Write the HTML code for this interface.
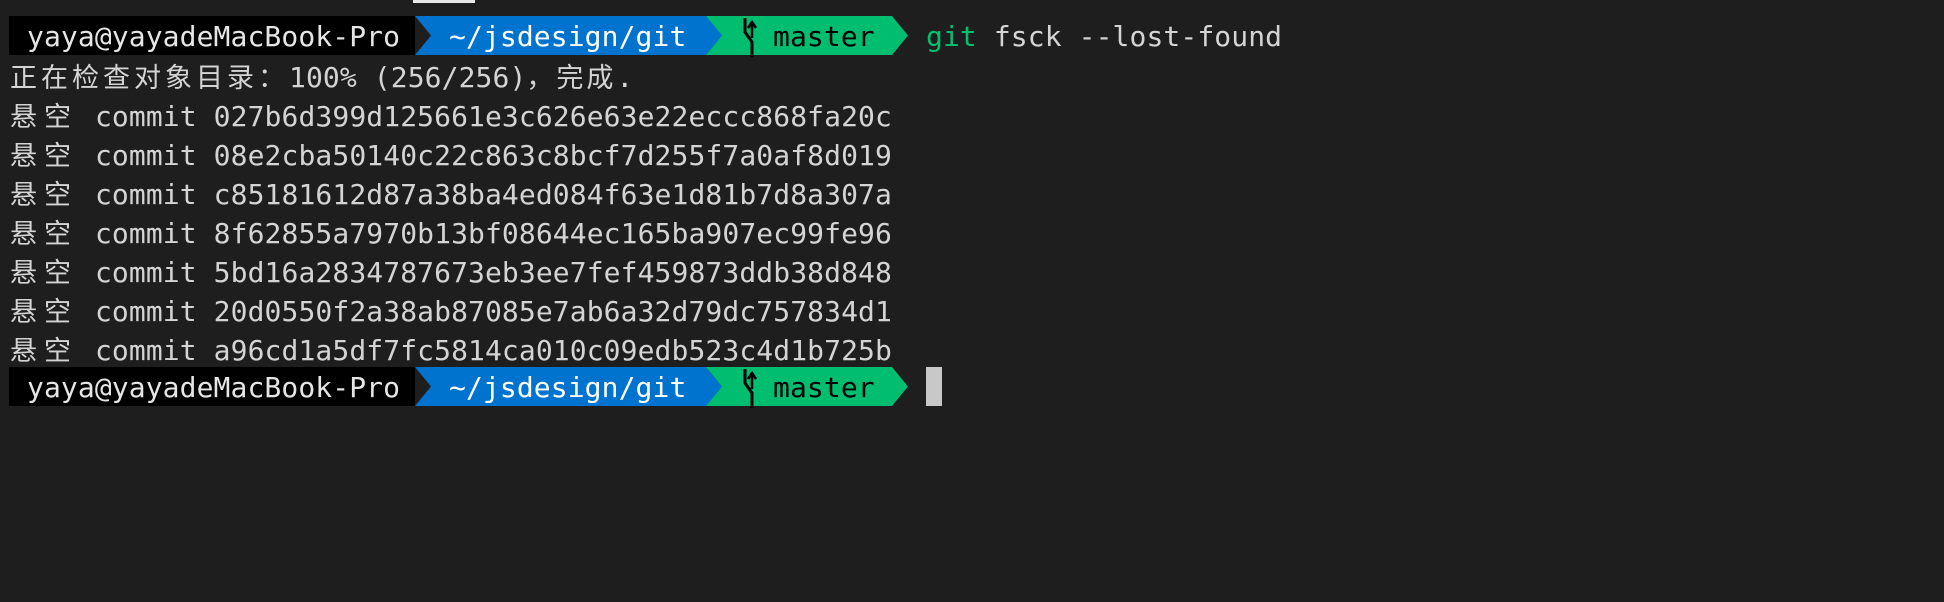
<!DOCTYPE html>
<html><head><meta charset="utf-8"><style>
html,body{margin:0;padding:0;background:#1e1e1e;width:1944px;height:602px;overflow:hidden;}
body{position:relative;font-family:"DejaVu Sans Mono","Noto Sans CJK SC",monospace;font-size:28px;color:#d4d4d4;}
.row{position:absolute;left:10px;height:39px;line-height:39px;white-space:pre;letter-spacing:0.1px;}
.c{letter-spacing:7px;font-family:"Noto Sans CJK SC",sans-serif;font-size:27px;}
.abs{position:absolute;}
.pt{position:absolute;line-height:39px;height:39px;white-space:pre;letter-spacing:0.1px;}
</style></head><body>
<div class="abs" style="left:413px;top:0;width:62px;height:3px;background:#e8e8e8"></div>

<!-- prompt 1 -->
<svg class="abs" style="left:0;top:16px" width="1944" height="42">
<rect x="9" y="0" width="406" height="39" fill="#000"/>
<polygon points="415,0 706,0 722,19.5 706,39 415,39 431,19.5" fill="#0073cf"/>
<polygon points="706,0 892,0 908,19.5 892,39 706,39 722,19.5" fill="#00bd70"/>
<path d="M745 2 V16 L752 26 V41" stroke="#000" stroke-width="3" fill="none"/>
<path d="M752 22 V8 M748 12 L752 6 L756 12" stroke="#000" stroke-width="2.5" fill="none"/>
</svg>
<div class="pt" style="left:27px;top:17px;color:#e6e6e6">yaya@yayadeMacBook-Pro</div>
<div class="pt" style="left:449px;top:17px;color:#fff">~/jsdesign/git</div>
<div class="pt" style="left:773px;top:17px;color:#000">master</div>
<div class="pt" style="left:926px;top:17px"><span style="color:#00c070">git</span> fsck --lost-found</div>

<div class="row" style="top:56px"><span class="c" style="letter-spacing:4px">正在检查对象目录：</span>100% (256/256)<span class="c" style="letter-spacing:3px">，完成</span>.</div>
<div class="row" style="top:95px"><span class="c">悬空</span> commit 027b6d399d125661e3c626e63e22eccc868fa20c</div>
<div class="row" style="top:134px"><span class="c">悬空</span> commit 08e2cba50140c22c863c8bcf7d255f7a0af8d019</div>
<div class="row" style="top:173px"><span class="c">悬空</span> commit c85181612d87a38ba4ed084f63e1d81b7d8a307a</div>
<div class="row" style="top:212px"><span class="c">悬空</span> commit 8f62855a7970b13bf08644ec165ba907ec99fe96</div>
<div class="row" style="top:251px"><span class="c">悬空</span> commit 5bd16a2834787673eb3ee7fef459873ddb38d848</div>
<div class="row" style="top:290px"><span class="c">悬空</span> commit 20d0550f2a38ab87085e7ab6a32d79dc757834d1</div>
<div class="row" style="top:329px"><span class="c">悬空</span> commit a96cd1a5df7fc5814ca010c09edb523c4d1b725b</div>

<!-- prompt 2 -->
<svg class="abs" style="left:0;top:367px" width="1944" height="42">
<rect x="9" y="0" width="406" height="39" fill="#000"/>
<polygon points="415,0 706,0 722,19.5 706,39 415,39 431,19.5" fill="#0073cf"/>
<polygon points="706,0 892,0 908,19.5 892,39 706,39 722,19.5" fill="#00bd70"/>
<path d="M745 2 V16 L752 26 V41" stroke="#000" stroke-width="3" fill="none"/>
<path d="M752 22 V8 M748 12 L752 6 L756 12" stroke="#000" stroke-width="2.5" fill="none"/>
<rect x="926" y="0" width="16" height="39" fill="#c8c8c8"/>
</svg>
<div class="pt" style="left:27px;top:368px;color:#e6e6e6">yaya@yayadeMacBook-Pro</div>
<div class="pt" style="left:449px;top:368px;color:#fff">~/jsdesign/git</div>
<div class="pt" style="left:773px;top:368px;color:#000">master</div>
</body></html>
